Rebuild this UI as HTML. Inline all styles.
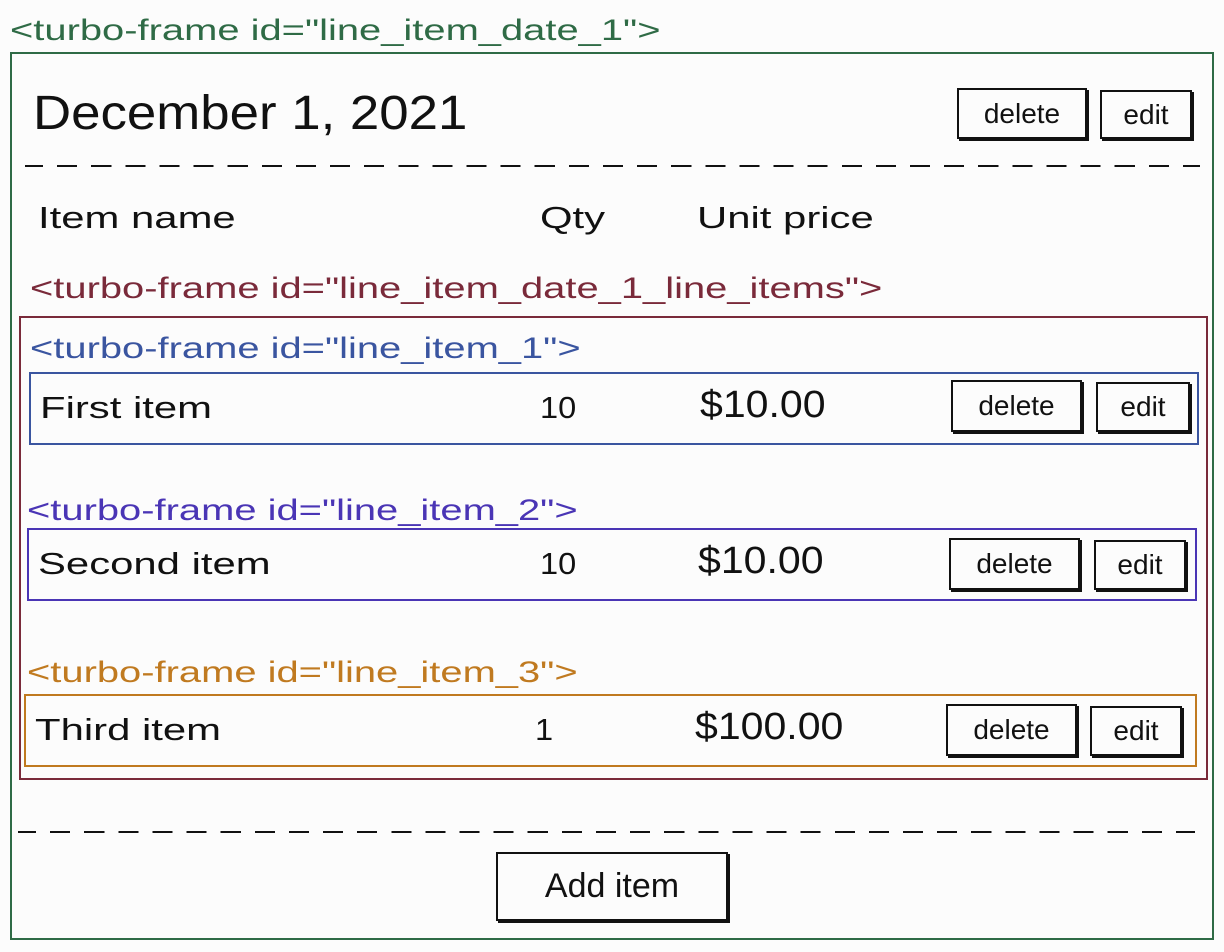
<!DOCTYPE html>
<html><head><meta charset="utf-8"><style>
body{margin:0;width:1224px;height:952px;background:#fcfcfc;position:relative;overflow:hidden;font-family:"Liberation Sans",sans-serif;color:#111}
.a{position:absolute;white-space:nowrap;transform-origin:0 50%}
.lbl{font-size:30px;transform:scaleX(1.33)}
.box{position:absolute;border:2px solid}
.btn{position:absolute;border:2px solid #111;box-shadow:2px 2px 0 0 #111;display:flex;align-items:center;justify-content:center;font-size:28px;box-sizing:border-box}
.row{font-size:31px;transform:scaleX(1.35)}
.num{font-size:31px;transform:scaleX(1.05)}
.pr{font-size:38px;transform:scaleX(1.08)}
.dash{position:absolute;height:0;border-top:2px dashed #111}
</style></head><body>
<div class="a lbl" style="left:10px;top:14px;color:#2f6b46">&lt;turbo-frame id="line_item_date_1"&gt;</div>
<div class="box" style="left:10px;top:52px;width:1200px;height:884px;border-color:#2f6b46"></div>
<div class="a" style="left:33px;top:86px;font-size:48px;transform:scaleX(1.1)">December 1, 2021</div>
<div class="btn" style="left:957px;top:88px;width:130px;height:51px">delete</div>
<div class="btn" style="left:1100px;top:90px;width:92px;height:49px">edit</div>
<div class="dash" style="left:25px;top:165px;width:1175px;border-image:repeating-linear-gradient(90deg,#111 0 20px,transparent 20px 34px) 2"></div>
<div class="a row" style="left:38px;top:200px">Item name</div>
<div class="a row" style="left:540px;top:200px">Qty</div>
<div class="a row" style="left:697px;top:200px">Unit price</div>
<div class="a lbl" style="left:30px;top:272px;color:#7a2a3a">&lt;turbo-frame id="line_item_date_1_line_items"&gt;</div>
<div class="box" style="left:19px;top:316px;width:1185px;height:460px;border-color:#7a2a3a"></div>

<div class="a lbl" style="left:30px;top:332px;color:#3a55a0">&lt;turbo-frame id="line_item_1"&gt;</div>
<div class="box" style="left:29px;top:372px;width:1166px;height:69px;border-color:#3a55a0"></div>
<div class="a row" style="left:40px;top:390px">First item</div>
<div class="a num" style="left:540px;top:390px">10</div>
<div class="a pr" style="left:700px;top:384px">$10.00</div>
<div class="btn" style="left:951px;top:380px;width:131px;height:52px">delete</div>
<div class="btn" style="left:1096px;top:382px;width:94px;height:50px">edit</div>

<div class="a lbl" style="left:27px;top:494px;color:#4a35b5">&lt;turbo-frame id="line_item_2"&gt;</div>
<div class="box" style="left:27px;top:528px;width:1166px;height:69px;border-color:#4a35b5"></div>
<div class="a row" style="left:38px;top:546px">Second item</div>
<div class="a num" style="left:540px;top:546px">10</div>
<div class="a pr" style="left:698px;top:540px">$10.00</div>
<div class="btn" style="left:949px;top:538px;width:131px;height:52px">delete</div>
<div class="btn" style="left:1094px;top:540px;width:92px;height:50px">edit</div>

<div class="a lbl" style="left:27px;top:656px;color:#c07a20">&lt;turbo-frame id="line_item_3"&gt;</div>
<div class="box" style="left:24px;top:694px;width:1169px;height:69px;border-color:#c07a20"></div>
<div class="a row" style="left:35px;top:712px">Third item</div>
<div class="a num" style="left:535px;top:712px">1</div>
<div class="a pr" style="left:695px;top:706px">$100.00</div>
<div class="btn" style="left:946px;top:704px;width:131px;height:52px">delete</div>
<div class="btn" style="left:1090px;top:706px;width:92px;height:50px">edit</div>

<div class="dash" style="left:18px;top:831px;width:1177px;border-image:repeating-linear-gradient(90deg,#111 0 20px,transparent 20px 34px) 2"></div>
<div class="btn" style="left:496px;top:852px;width:232px;height:69px;font-size:34px">Add item</div>
</body></html>
